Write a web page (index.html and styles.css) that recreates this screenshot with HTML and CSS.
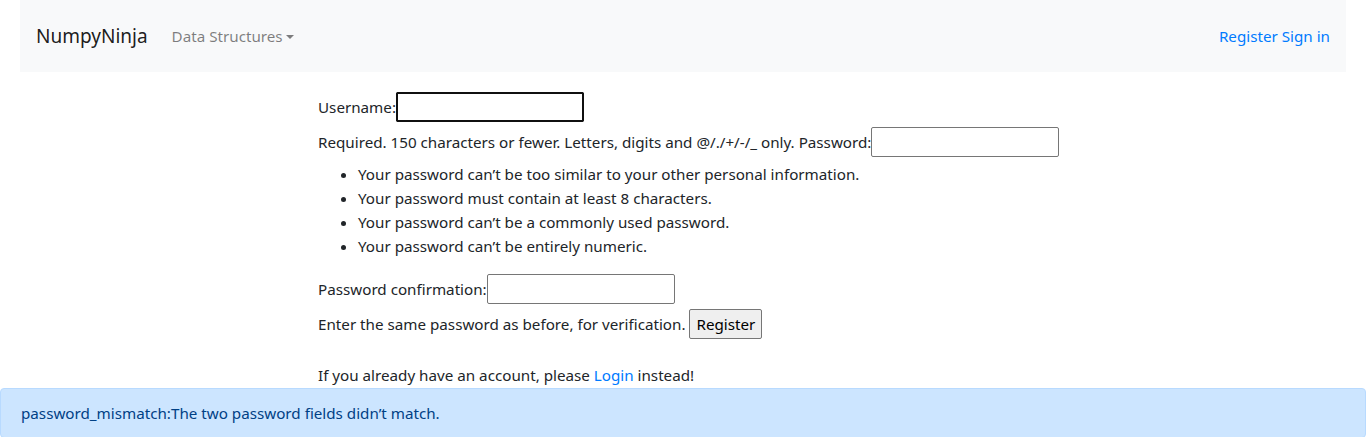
FILE: index.html
```html
<!DOCTYPE html>
<html>
<head>
<meta charset="utf-8">
<link rel="stylesheet" href="styles.css">
</head>
<body>
<div class="page">
  <nav class="navbar">
    <a class="brand" href="#">NumpyNinja</a>
    <a class="nav-link dropdown" href="#">Data Structures<span class="caret"></span></a>
    <div class="nav-right">
      <a href="#">Register</a> <a href="#">Sign in</a>
    </div>
  </nav>
</div>
<form class="reg-form">
  <div class="row row-first"><label>Username:</label><input type="text" class="focused"></div>
  <div class="row row-second"><span class="helptext">Required. 150 characters or fewer. Letters, digits and @/./+/-/_ only.</span>&nbsp;<label>Password:</label><input type="password"></div>
  <ul class="help-list">
    <li>Your password can’t be too similar to your other personal information.</li>
    <li>Your password must contain at least 8 characters.</li>
    <li>Your password can’t be a commonly used password.</li>
    <li>Your password can’t be entirely numeric.</li>
  </ul>
  <div class="row"><label>Password confirmation:</label><input type="password"></div>
  <div class="row row-btn"><span class="helptext">Enter the same password as before, for verification.</span>&nbsp;<button type="button">Register</button></div>
  <p class="login-line">If you already have an account, please <a href="#">Login</a> instead!</p>
</form>
<div class="alert">password_mismatch:The two password fields didn’t match.</div>
</body>
</html>
```
FILE: styles.css
```css
* { box-sizing: border-box; }
html, body { margin: 0; padding: 0; }
body {
  font-family: "Noto Sans", "Segoe UI", Arial, sans-serif;
  font-size: 15.2px;
  line-height: 24px;
  color: #212529;
  background: #fff;
  overflow: hidden;
}
a { color: #007bff; text-decoration: none; }
.page { padding: 0 20px; }
.navbar {
  display: flex;
  align-items: center;
  height: 72px;
  padding: 0 16px;
  background: #f8f9fa;
}
.brand {
  font-size: 19px;
  line-height: 30px;
  color: rgba(0,0,0,.9);
  margin-right: 16px;
}
.nav-link {
  color: rgba(0,0,0,.5);
  padding: 8px;
  display: inline-flex;
  align-items: center;
}
.caret {
  display: inline-block;
  margin-left: .255em;
  border-top: .3em solid;
  border-right: .3em solid transparent;
  border-left: .3em solid transparent;
  border-bottom: 0;
  margin-top: 1px;
}
.nav-right { margin-left: auto; }
.reg-form { padding-left: 318px; padding-top: 20px; }
.row { display: flex; align-items: center; height: 30px; white-space: nowrap; }
.row-second { margin-top: 5px; }
.row-btn { margin-top: 5px; }
input {
  width: 188px;
  height: 30px;
  border: 1px solid #767676;
  border-radius: 2px;
  padding: 1px 2px;
  font: inherit;
  background: #fff;
}
input.focused { outline: 2px solid #101010; outline-offset: -2px; border-color: #101010; }
button {
  font: inherit;
  height: 30px;
  padding: 1px 6px;
  border: 1px solid #767676;
  border-radius: 2px;
  background: #efefef;
  color: #000;
}
.help-list { margin: 5px 0 16px; padding-left: 40px; }
.login-line { margin: 24px 0 0; }
.alert {
  margin-top: 1px;
  padding: 12px 20px;
  background: #cce5ff;
  border: 1px solid #b8daff;
  border-radius: 4px;
  color: #004085;
}
```
